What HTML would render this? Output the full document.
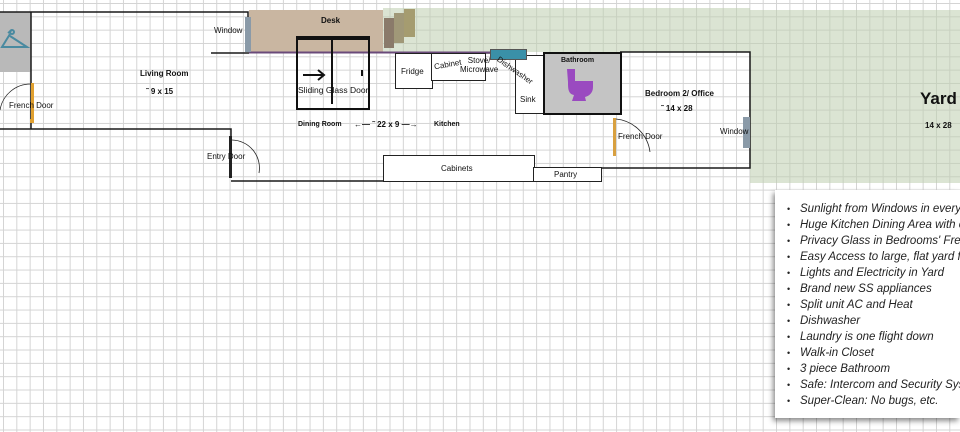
<!DOCTYPE html>
<html><head><meta charset="utf-8"><style>
html,body{margin:0;padding:0}
body{width:960px;height:432px;overflow:hidden;position:relative;background:#fff;
background-image:linear-gradient(to right,#d4d4d4 1px,transparent 1px),linear-gradient(to bottom,#d4d4d4 1px,transparent 1px);
background-size:13.33px 13.33px;background-position:3px 3px;font-family:"Liberation Sans",sans-serif;}
.a{position:absolute}
.t{position:absolute;font-size:8px;color:#111;white-space:nowrap}
.b{font-weight:bold;font-family:"Liberation Sans Narrow","Liberation Sans",sans-serif}
.box{position:absolute;border:1px solid #222;background:#fff}
.green{position:absolute;background:rgba(190,205,175,0.55)}
.card{position:absolute;left:775px;top:190px;width:185px;height:228px;background:#fff;box-shadow:-2px 3px 5px rgba(0,0,0,.45);overflow:hidden}
.card ul{margin:0;padding:0 0 0 25px;font-style:italic;font-size:11.5px;line-height:16px;color:#222;white-space:nowrap}
.card li{list-style:none;position:relative}
.card li:before{content:"•";position:absolute;left:-13px;font-style:normal;font-size:9px}
</style></head><body>
<div class="green" style="left:383px;top:8px;width:367px;height:44px"></div>
<div class="green" style="left:750px;top:10px;width:210px;height:173px"></div>
<div class="a" style="left:0;top:12px;width:31px;height:60px;background:#b9b9b9"></div>
<div class="a" style="left:249px;top:10px;width:134px;height:42px;background:#c9b6a1"></div>
<div class="a" style="left:384px;top:18px;width:10px;height:30px;background:#8a7a6a"></div>
<div class="a" style="left:394px;top:13px;width:10px;height:30px;background:#a09878"></div>
<div class="a" style="left:404px;top:9px;width:11px;height:28px;background:#a59c70"></div>
<div class="t b" style="left:321px;top:16px">Desk</div>
<svg class="a" style="left:0;top:0" width="960" height="432">
<g stroke="#1a1a1a" stroke-width="1.5" fill="none">
<path d="M0 12H248V52"/>
<path d="M211 53H249"/>
<path d="M31 12V129M0 129H231V136"/>
<path d="M231 181H600"/>
<path d="M600 168H750V52H620"/>
<path d="M400 53H490"/>
</g>
<path d="M249 52.5H490" stroke="#6a4a7a" stroke-width="2"/>
<path d="M383 181H600" stroke="#5a3a6a" stroke-width="1.5"/>
<g stroke="#222" stroke-width="0.8" fill="none">
<path d="M0 110A31 31 0 0 1 31 84"/>
<path d="M232 140A28 28 0 0 1 259 173"/>
<path d="M616 119A38 38 0 0 1 650 152"/>
</g>
<rect x="31" y="83" width="3" height="38" fill="#e0a030"/>
<rect x="30" y="119" width="4" height="4" fill="#e0a030"/>
<rect x="229" y="136" width="3" height="42" fill="#222"/>
<rect x="613" y="118" width="3" height="38" fill="#d8a040"/>
<rect x="245" y="17" width="6" height="35" fill="#8a9aa8"/>
<rect x="743" y="117" width="7" height="31" fill="#8a9aa8"/>
<g stroke="#4a8aa0" stroke-width="2" fill="none"><path d="M8 33l4-3M10 34L2 47h25L10 36"/><circle cx="12" cy="32" r="2"/></g>
<path d="M303 75H323M318 70l6 5-6 5" stroke="#111" stroke-width="2" fill="none"/>
</svg>
<div class="box" style="left:296px;top:36px;width:70px;height:68px;border:2px solid #111;border-top:4px solid #111;background:transparent"></div>
<div class="a" style="left:331px;top:40px;width:2px;height:64px;background:#111"></div>
<div class="a" style="left:296px;top:38px;width:74px;height:1px;background:#111"></div>
<div class="a" style="left:361px;top:70px;width:2px;height:6px;background:#111"></div>
<div class="t" style="left:298px;top:85px;font-size:8.5px">Sliding Glass Door</div>
<div class="box" style="left:395px;top:53px;width:36px;height:34px"></div>
<div class="t" style="left:401px;top:67px;font-size:8px">Fridge</div>
<div class="box" style="left:431px;top:53px;width:53px;height:26px"></div>
<div class="t" style="left:434px;top:60px;font-size:8px;transform:rotate(-10deg)">Cabinet</div>
<div class="t" style="left:460px;top:56px;font-size:8px;line-height:9px;text-align:center">Stove/<br>Microwave</div>
<div class="box" style="left:515px;top:55px;width:28px;height:57px"></div>
<div class="t" style="left:520px;top:95px;font-size:8px">Sink</div>
<div class="a" style="left:490px;top:49px;width:35px;height:9px;background:#3a90a8;border:1px solid #555"></div>
<div class="t" style="left:494px;top:66px;font-size:8px;transform:rotate(35deg)">Dishwasher</div>
<div class="a" style="left:543px;top:52px;width:75px;height:59px;background:#c4c4c4;border:2px solid #111"></div>
<div class="t b" style="left:561px;top:57px;font-size:7px">Bathroom</div>
<svg class="a" style="left:565px;top:68px" width="30" height="34"><path d="M2 1h8v12h18v6c0 6-4 9-8 10l1 4H7l2-6C3 26 3 20 3 14Z" fill="#9a4ac0"/></svg>
<div class="box" style="left:383px;top:155px;width:150px;height:25px"></div>
<div class="t" style="left:441px;top:164px">Cabinets</div>
<div class="box" style="left:533px;top:167px;width:67px;height:13px"></div>
<div class="t" style="left:554px;top:170px">Pantry</div>
<div class="t" style="left:214px;top:26px">Window</div>
<div class="t" style="left:9px;top:101px">French Door</div>
<div class="t" style="left:207px;top:152px">Entry Door</div>
<div class="t" style="left:618px;top:132px">French Door</div>
<div class="t" style="left:720px;top:127px">Window</div>
<div class="t b" style="left:140px;top:69px">Living Room</div>
<div class="t b" style="left:146px;top:87px">˜ 9 x 15</div>
<div class="t b" style="left:298px;top:121px;font-size:7px">Dining Room</div>
<div class="t b" style="left:354px;top:120px">←— ˜ 22 x 9 —→</div>
<div class="t b" style="left:434px;top:121px;font-size:7px">Kitchen</div>
<div class="t b" style="left:645px;top:89px">Bedroom 2/ Office</div>
<div class="t b" style="left:661px;top:104px">˜ 14 x 28</div>
<div class="t b" style="left:920px;top:89px;font-size:17px">Yard</div>
<div class="t b" style="left:925px;top:121px;font-size:8px">14 x 28</div>
<div class="card"><ul style="padding-top:11px">
<li>Sunlight from Windows in every room</li>
<li>Huge Kitchen Dining Area with closet</li>
<li>Privacy Glass in Bedrooms' French Doors</li>
<li>Easy Access to large, flat yard for you</li>
<li>Lights and Electricity in Yard</li>
<li>Brand new SS appliances</li>
<li>Split unit AC and Heat</li>
<li>Dishwasher</li>
<li>Laundry is one flight down</li>
<li>Walk-in Closet</li>
<li>3 piece Bathroom</li>
<li>Safe: Intercom and Security System</li>
<li>Super-Clean: No bugs, etc.</li>
</ul></div>
</body></html>
